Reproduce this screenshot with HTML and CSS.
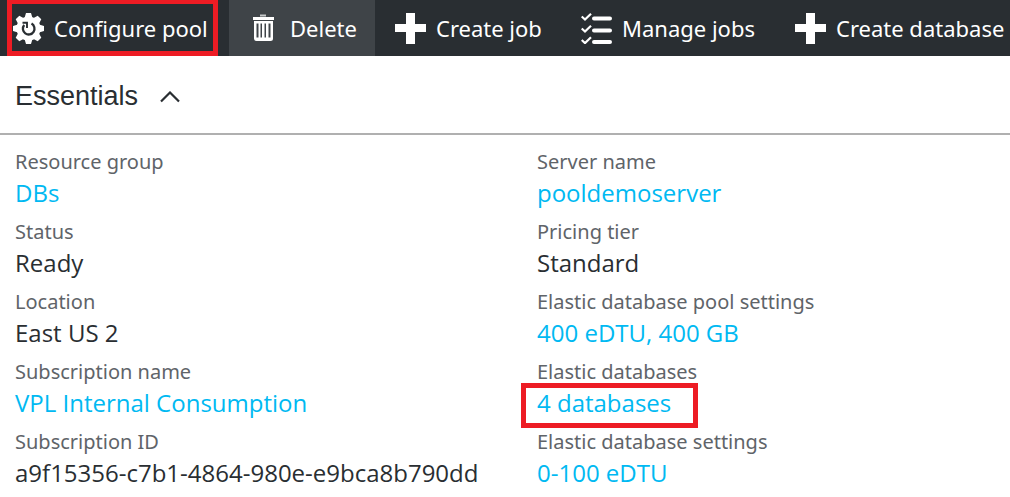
FILE: index.html
```html
<!DOCTYPE html>
<html lang="en">
<head>
<meta charset="utf-8">
<title>Elastic database pool</title>
<link rel="stylesheet" href="styles.css">
</head>
<body>
<nav class="toolbar" aria-label="Pool commands">
  <button class="command command-first" type="button">
    <svg class="icon" viewBox="0 0 31 31" aria-hidden="true">
      <circle cx="15.500" cy="15.500" r="12" fill="#fff"/>
      <path fill="#fff" d="M11.500 5L13 0H18L19.500 5ZM11.500 26L13 31H18L19.500 26ZM5 11.500L0 13V18L5 19.500ZM26 11.500L31 13V18L26 19.500ZM5.200 10.900L2.700 6.300L6.300 2.700L10.900 5.200ZM20.100 5.200L24.700 2.700L28.300 6.300L25.800 10.900ZM25.800 20.100L28.300 24.700L24.700 28.300L20.100 25.800ZM10.900 25.800L6.300 28.300L2.700 24.700L5.200 20.100Z"/>
      <path fill="none" stroke="#292e32" stroke-width="2.300" d="M18.500 10.600A5.800 5.800 0 1 1 11.200 12"/>
      <path fill="none" stroke="#292e32" stroke-width="1.900" d="M9.500 9.800H14V15"/>
    </svg>
    <span>Configure pool</span>
  </button>
  <button class="command command-active" type="button">
    <svg class="icon" viewBox="0 0 31 31" aria-hidden="true">
      <path fill="#c8cacb" d="M11 1.500H17V3.500H11Z"/>
      <path fill="#fff" d="M4 4H25V7H4Z"/>
      <path fill="#fff" fill-rule="evenodd" d="M5 8H24V25.500Q24 28 21.500 28H7.500Q5 28 5 25.500ZM7.500 10.500V24.500H9.500V10.500ZM11.500 10.500V24.500H13V10.500ZM15.500 10.500V24.500H17V10.500ZM19.500 10.500V24.500H21.500V10.500Z"/>
    </svg>
    <span>Delete</span>
  </button>
  <button class="command" type="button">
    <svg class="icon" viewBox="0 0 31 31" aria-hidden="true"><path fill="#fff" d="M11 0H20V11H31V19H20V31H11V19H0V11H11Z"/></svg>
    <span>Create job</span>
  </button>
  <button class="command" type="button">
    <svg class="icon" viewBox="0 0 31 31" aria-hidden="true">
      <path fill="none" stroke="#fff" stroke-width="4" stroke-linecap="round" d="M13 5.500H29M13 17.500H29M13 29H29"/>
      <path fill="none" stroke="#fff" stroke-width="2.200" d="M.7 3.500L4 6.600L10 .8M.7 15.500L4 18.600L10 12.800M.7 27L4 30.100L10 24.300"/>
    </svg>
    <span>Manage jobs</span>
  </button>
  <button class="command" type="button">
    <svg class="icon" viewBox="0 0 31 31" aria-hidden="true"><path fill="#fff" d="M11 0H20V11H31V19H20V31H11V19H0V11H11Z"/></svg>
    <span>Create database</span>
  </button>
</nav>
<main>
  <h1 class="heading">
    <button class="toggle" type="button" aria-expanded="true">
      <span>Essentials</span>
      <svg class="chevron" viewBox="0 0 20 12" aria-hidden="true"><path fill="none" stroke="#292e32" stroke-width="2.200" d="M1 10.500L10 1.500L19 10.500"/></svg>
    </button>
  </h1>
  <div class="essentials">
    <dl class="column">
      <div><dt>Resource group</dt><dd><a href="#">DBs</a></dd></div>
      <div><dt>Status</dt><dd>Ready</dd></div>
      <div><dt>Location</dt><dd>East US 2</dd></div>
      <div><dt>Subscription name</dt><dd><a href="#">VPL Internal Consumption</a></dd></div>
      <div><dt>Subscription ID</dt><dd>a9f15356-c7b1-4864-980e-e9bca8b790dd</dd></div>
    </dl>
    <dl class="column">
      <div><dt>Server name</dt><dd><a href="#">pooldemoserver</a></dd></div>
      <div><dt>Pricing tier</dt><dd>Standard</dd></div>
      <div><dt>Elastic database pool settings</dt><dd><a href="#">400 eDTU, 400 GB</a></dd></div>
      <div><dt>Elastic databases</dt><dd class="marked"><a href="#">4 databases</a></dd></div>
      <div><dt>Elastic database settings</dt><dd><a href="#">0-100 eDTU</a></dd></div>
    </dl>
  </div>
</main>
</body>
</html>
```
FILE: styles.css
```css
* {
  box-sizing: border-box;
}

body {
  margin: 0;
  background: #fff;
  color: #292e32;
  font-family: "Open Sans", "Noto Sans", sans-serif;
}

button {
  margin: 0;
  border: 0;
  background: none;
  color: inherit;
  font: inherit;
}

.toolbar {
  display: grid;
  grid-template-columns: 229fr 146fr 186fr 214fr 235fr;
  height: 56px;
  background: #292e32;
  color: #fff;
}

.command {
  position: relative;
  display: flex;
  align-items: center;
  gap: 10px;
  padding: 0 0 0 20px;
  font-family: "Noto Sans", "Open Sans", sans-serif;
  font-size: 22px;
  line-height: 32px;
  white-space: nowrap;
}

.command-first {
  padding-left: 13px;
}

.command-first::after {
  content: "";
  position: absolute;
  inset: 0 11px 0 7px;
  border: 5px solid #ed1c24;
  border-top-width: 4px;
}

.command-active {
  background: #3f4448;
}

.icon {
  flex: none;
  width: 31px;
  height: 31px;
}

.heading {
  margin: 0;
  padding: 23px 15px 19px;
  border-bottom: 2px solid #b0b0b0;
  font-family: "Liberation Sans", Arial, sans-serif;
  font-size: 27px;
  font-weight: 400;
  line-height: 35px;
}

.toggle {
  display: flex;
  align-items: center;
  gap: 22px;
  padding: 0;
}

.chevron {
  width: 20px;
  height: 12px;
}

.essentials {
  display: grid;
  grid-template-columns: 522fr 473fr;
  padding: 12px 0 0 15px;
}

.column {
  display: grid;
  gap: 8px;
  margin: 0;
}

dt {
  color: #5f6469;
  font-family: "Noto Sans", "Open Sans", sans-serif;
  font-size: 20px;
  line-height: 30px;
}

dd {
  position: relative;
  width: fit-content;
  margin: 0;
  font-size: 24px;
  line-height: 32px;
}

dd a {
  color: #00b9f2;
  text-decoration: none;
}

.marked::after {
  content: "";
  position: absolute;
  inset: -4px -27px -9px -16px;
  border: 5px solid #ed1c24;
  pointer-events: none;
}
```
